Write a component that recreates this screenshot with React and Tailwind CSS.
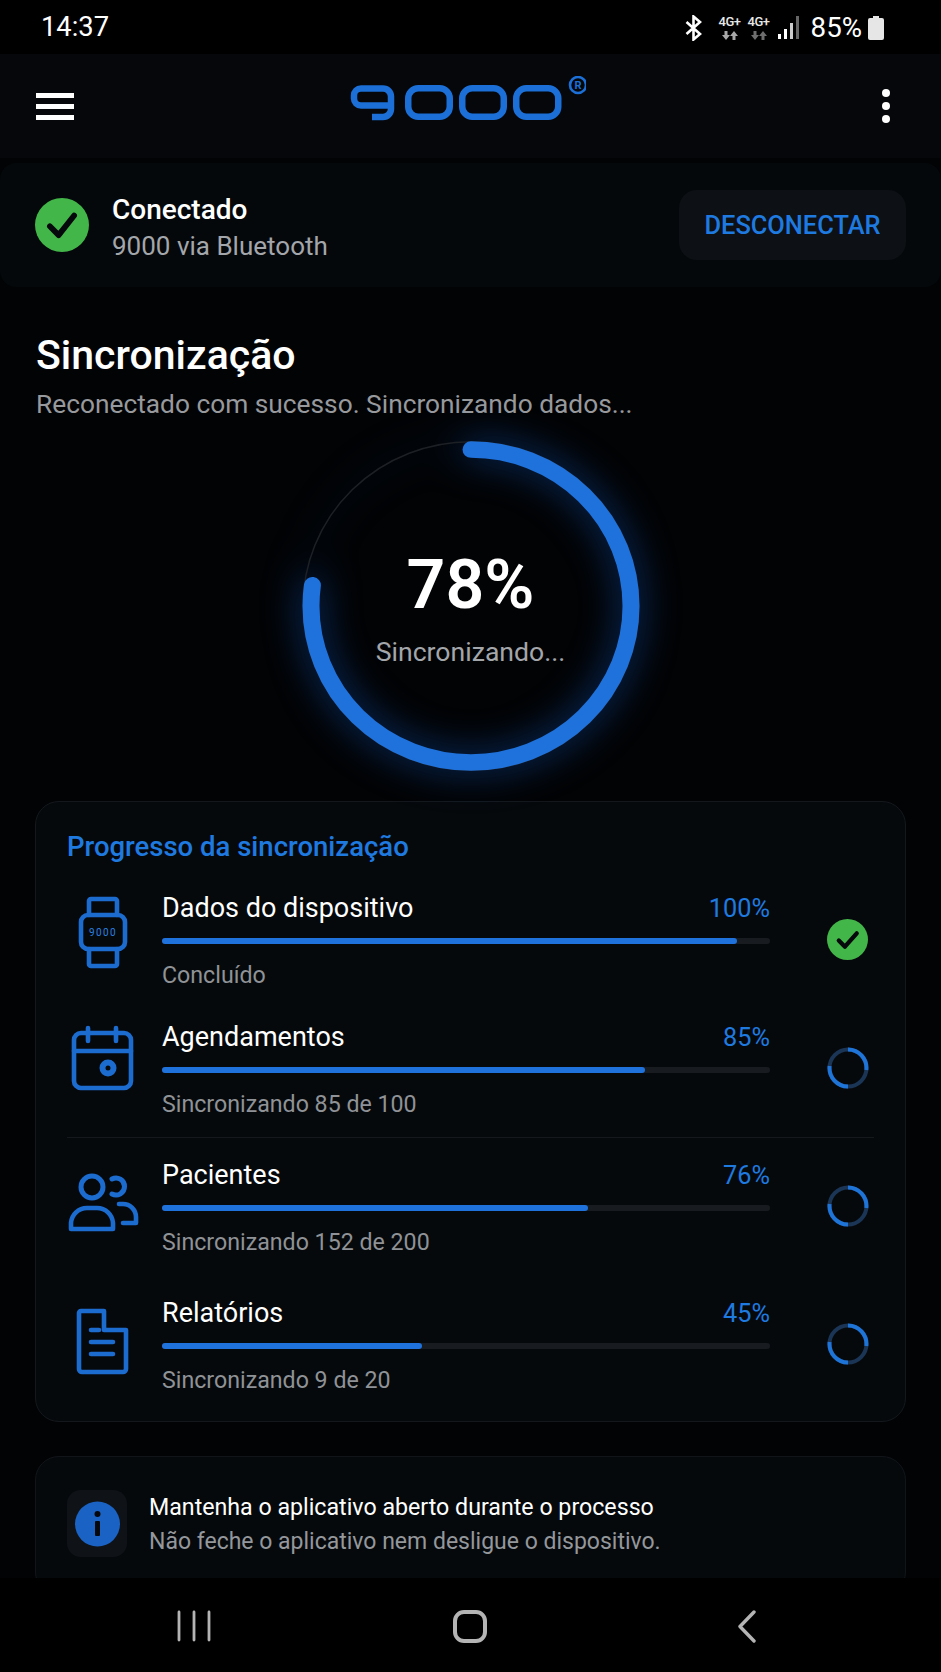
import React from 'react';

const rows = [
  { name: 'Dados do dispositivo', pct: '100%', fill: 'w-[94.6%]', sub: 'Concluído', icon: 'watch', gap: 'mt-[28px]' },
  { name: 'Agendamentos', pct: '85%', fill: 'w-[79.5%]', sub: 'Sincronizando 85 de 100', icon: 'calendar', gap: 'mt-[31px]' },
  { name: 'Pacientes', pct: '76%', fill: 'w-[70%]', sub: 'Sincronizando 152 de 200', icon: 'users', gap: 'mt-[21px]', divider: true },
  { name: 'Relatórios', pct: '45%', fill: 'w-[42.7%]', sub: 'Sincronizando 9 de 20', icon: 'doc', gap: 'mt-[40px]' },
];

function CheckBadge({ size, check }) {
  return (
    <svg width={size} height={size} viewBox="0 0 40 40" className="shrink-0">
      <circle cx="20" cy="20" r="20" fill="#43b649" />
      <path d={check} fill="none" stroke="#06090c" strokeWidth="4.2" strokeLinecap="round" strokeLinejoin="round" />
    </svg>
  );
}

function Spinner() {
  return (
    <svg width="42" height="42" viewBox="0 0 42 42" className="shrink-0">
      <circle cx="21" cy="21" r="18.5" fill="none" stroke="#1b3556" strokeWidth="4" />
      <path d="M21 2.5 A18.5 18.5 0 0 1 39.3 23" fill="none" stroke="#1f74d8" strokeWidth="4" />
      <path d="M21 39.5 A18.5 18.5 0 0 1 2.6 19" fill="none" stroke="#1f74d8" strokeWidth="4" />
    </svg>
  );
}

function RowIcon({ type }) {
  const line = { fill: 'none', stroke: '#1c6cd0', strokeWidth: 4.6, strokeLinejoin: 'round', strokeLinecap: 'round' };
  return (
    <svg width="72" height="98" viewBox="0 0 72 98" className="shrink-0">
      {type === 'watch' && (
        <g {...line}>
          <rect x="14" y="23" width="44" height="34" rx="7" />
          <path d="M22 23 V9 a2 2 0 0 1 2 -2 H48 a2 2 0 0 1 2 2 V23" />
          <path d="M22 57 V72 a2 2 0 0 0 2 2 H48 a2 2 0 0 0 2 -2 V57" />
          <text x="36" y="44" textAnchor="middle" fontSize="10" fontFamily="Roboto" fontWeight="400" fill="#2a80e0" stroke="none" letterSpacing="1.4">9000</text>
        </g>
      )}
      {type === 'calendar' && (
        <g {...line}>
          <rect x="7" y="12" width="57" height="55" rx="7" />
          <path d="M7 30 H64" />
          <path d="M21 7 V20 M49 7 V20" />
          <circle cx="41" cy="47" r="5.5" strokeWidth="6" />
        </g>
      )}
      {type === 'users' && (
        <g {...line}>
          <circle cx="25" cy="28" r="11" strokeWidth="5" />
          <path d="M4 70 V64 a16 16 0 0 1 16 -15 H30 a16 16 0 0 1 16 15 V70 Z" />
          <path d="M45 20 a8.5 8.5 0 1 1 0 15" strokeWidth="5" />
          <path d="M52 45 H56 a13 13 0 0 1 13 13 V64 H56" />
        </g>
      )}
      {type === 'doc' && (
        <g {...line}>
          <path d="M12 16 a2 2 0 0 1 2 -2 H37 V33 H59 V72 a3 3 0 0 1 -3 3 H15 a3 3 0 0 1 -3 -3 Z" />
          <path d="M24 33 H32 M24 45 H46 M24 57 H46" />
        </g>
      )}
    </svg>
  );
}

function Logo() {
  const s = { fill: 'none', stroke: '#1b6fd6', strokeWidth: 6.5 };
  return (
    <svg width="240" height="60" viewBox="0 0 240 60">
      <path {...s} strokeLinejoin="round" d="M45 29.5 H15 a7 7 0 0 1 -7 -7 V19.5 a7 7 0 0 1 7 -7 H37 a8 8 0 0 1 8 8 V33 a8 8 0 0 1 -8 8 H26" />
      <rect {...s} x="62.25" y="12.25" width="41.5" height="28.5" rx="10" />
      <rect {...s} x="116.25" y="12.25" width="41.5" height="28.5" rx="10" />
      <rect {...s} x="170.25" y="12.25" width="42" height="28.5" rx="10" />
      <circle cx="232" cy="9" r="8" fill="none" stroke="#1b6fd6" strokeWidth="2.6" />
      <text x="232" y="13" textAnchor="middle" fontSize="11" fontFamily="Roboto" fontWeight="700" fill="#1b6fd6">R</text>
    </svg>
  );
}

function NetBadge({ arrows }) {
  return (
    <div className="w-[24px] flex flex-col items-center text-[13px] leading-[14px] font-medium text-[#e8e8e8] tracking-[-0.5px]">
      <span>4G+</span>
      <svg width="16" height="9" viewBox="0 0 16 9" className="mt-[2px]" fill={arrows}>
        <path d="M4 9 L0 4 H2.5 V0 H5.5 V4 H8 Z" />
        <path d="M12 0 L16 5 H13.5 V9 H10.5 V5 H8 Z" />
      </svg>
    </div>
  );
}

function StatusBar() {
  return (
    <div className="h-[54px] shrink-0 bg-black flex items-center pt-[2px] pl-[41px] pr-[57px] text-white">
      <span className="text-[27.3px] leading-none">14:37</span>
      <div className="ml-auto flex items-center">
        <svg width="18" height="26" viewBox="0 0 18 26" fill="none" stroke="#fff" strokeWidth="2.6">
          <path d="M1.5 7 L15 19 L8.5 24.5 V1.5 L15 7 L1.5 19" />
        </svg>
        <div className="ml-[15px]"><NetBadge arrows="#a8a8a8" /></div>
        <div className="ml-[5px]"><NetBadge arrows="#6e6e6e" /></div>
        <svg width="22" height="23" viewBox="0 0 22 23" className="ml-[7px]">
          <rect x="0" y="18" width="3" height="5" fill="#fff" />
          <rect x="6" y="13" width="3" height="10" fill="#fff" />
          <rect x="12" y="7" width="3" height="16" fill="#ccc" />
          <rect x="18" y="0" width="3" height="23" fill="#666" />
        </svg>
        <span className="ml-[11px] text-[27.7px] leading-none">85%</span>
        <svg width="16" height="24" viewBox="0 0 16 24" className="ml-[6px]">
          <path d="M5 0 H11 V2 H14 a2 2 0 0 1 2 2 V22 a2 2 0 0 1 -2 2 H2 a2 2 0 0 1 -2 -2 V4 a2 2 0 0 1 2 -2 H5 Z" fill="#e6e6e6" />
        </svg>
      </div>
    </div>
  );
}

export default function App() {
  return (
    <div className="h-[1672px] w-[941px] flex flex-col overflow-hidden bg-black font-[Roboto,sans-serif] text-white">
      <StatusBar />

      <div className="flex-1 min-h-0 overflow-hidden bg-[#020305]">
        {/* header */}
        <div className="h-[104px] bg-[#05070a] flex items-center justify-between pl-[36px] pr-[51px]">
          <div className="w-[38px] flex flex-col gap-[6px]">
            <div className="h-[5px] bg-white" />
            <div className="h-[5px] bg-white" />
            <div className="h-[5px] bg-white" />
          </div>
          <div className="mr-[24px]"><Logo /></div>
          <div className="flex flex-col gap-[5px]">
            <div className="w-[8px] h-[8px] rounded-full bg-white" />
            <div className="w-[8px] h-[8px] rounded-full bg-white" />
            <div className="w-[8px] h-[8px] rounded-full bg-white" />
          </div>
        </div>

        {/* connection */}
        <div className="mt-[5px] h-[124px] rounded-[16px] bg-[#05080b] flex items-center pl-[35px] pr-[35px]">
          <CheckBadge size={54} check="M11 21 L17.5 27.5 L29 13" />
          <div className="ml-[23px] mt-[6px]">
            <div className="text-[28px] leading-[36px] font-medium">Conectado</div>
            <div className="text-[26px] leading-[36px] text-[#a3a6aa]">9000 via Bluetooth</div>
          </div>
          <button className="ml-auto w-[227px] h-[70px] pt-[1px] rounded-[18px] bg-[#0d1014] text-[25.4px] font-medium text-[#1f7ae0]">DESCONECTAR</button>
        </div>

        {/* title */}
        <h1 className="mt-[46px] px-[36px] text-[41px] leading-[44px] font-medium">Sincronização</h1>
        <p className="mt-[11px] px-[36px] text-[26.3px] leading-[32px] text-[#97999d]">Reconectado com sucesso. Sincronizando dados...</p>

        {/* ring */}
        <div className="relative mt-[10px] mx-auto w-[360px] h-[352px]">
          <svg width="360" height="352" viewBox="0 0 360 360" preserveAspectRatio="none" className="overflow-visible drop-shadow-[0_0_18px_rgba(20,110,240,0.5)]">
            <circle cx="180" cy="180" r="168" fill="none" stroke="#1d2126" strokeWidth="1.5" />
            <circle
              cx="180"
              cy="180"
              r="160"
              fill="none"
              stroke="#1f72dc"
              strokeWidth="17"
              strokeLinecap="round"
              strokeDasharray="775 1005.3"
              transform="rotate(-90 180 180)"
            />
          </svg>
          <div className="absolute inset-0 flex flex-col items-center pt-[112px]">
            <div className="text-[68px] leading-[86px] font-semibold">78%</div>
            <div className="mt-[9px] text-[26.6px] leading-[30px] text-[#a3a6aa]">Sincronizando...</div>
          </div>
        </div>

        {/* progress card */}
        <div className="mt-[19px] mx-[35px] rounded-[24px] border border-[#14181d] bg-[#06090c] pt-[28px] pb-[26px] px-[31px]">
          <div className="text-[27.5px] leading-[34px] font-medium text-[#1f7ae0]">Progresso da sincronização</div>
          {rows.map(r => (
            <div key={r.name}>
              {r.divider && <div className="mt-[18px] h-px bg-[#15191e]" />}
              <div className={`${r.gap} h-[98px] flex items-center`}>
                <div className="w-[95px] shrink-0"><RowIcon type={r.icon} /></div>
                <div className="w-[608px] shrink-0">
                  <div className="h-[32px] flex items-center justify-between">
                    <span className="text-[27px] leading-[32px]">{r.name}</span>
                    <span className="text-[25.3px] leading-[32px] pt-[2px] text-[#1f7ae0]">{r.pct}</span>
                  </div>
                  <div className="mt-[14px] h-[6px] rounded-full bg-[#181b20]">
                    <div className={`h-full rounded-full bg-[#1f72dc] ${r.fill}`} />
                  </div>
                  <div className="mt-[16px] text-[23.2px] leading-[30px] text-[#8f9296]">{r.sub}</div>
                </div>
                <div className="ml-[57px] mb-[4px]">
                  {r.icon === 'watch' ? <CheckBadge size={41} check="M11.5 21 L17.5 27 L29 14" /> : <Spinner />}
                </div>
              </div>
            </div>
          ))}
        </div>

        {/* info card */}
        <div className="mt-[34px] mx-[35px] h-[140px] rounded-[24px] border border-[#11151a] bg-[#06090c] pt-[33px] pl-[31px] flex items-start">
          <div className="w-[60px] h-[67px] rounded-[14px] bg-[#0f1318] flex items-center justify-center">
            <svg width="45" height="46" viewBox="0 0 45 46">
              <circle cx="22.5" cy="23" r="22.5" fill="#1a63c4" />
              <circle cx="22.5" cy="13" r="3" fill="#05080c" />
              <rect x="20" y="20" width="5" height="15" rx="1" fill="#05080c" />
            </svg>
          </div>
          <div className="ml-[22px]">
            <div className="text-[23.2px] leading-[34px]">Mantenha o aplicativo aberto durante o processo</div>
            <div className="text-[23px] leading-[34px] text-[#94979b] mt-[1px]">Não feche o aplicativo nem desligue o dispositivo.</div>
          </div>
        </div>
      </div>

      {/* nav bar */}
      <div className="h-[94px] shrink-0 bg-black">
        <div className="flex items-center h-full pt-[2px]">
          <svg width="34" height="32" viewBox="0 0 34 32" className="ml-[177px]" fill="none" stroke="#b4b4b4" strokeWidth="2.8" strokeLinecap="round">
            <path d="M2 2 V30 M17 2 V30 M32 2 V30" />
          </svg>
          <svg width="34" height="33" viewBox="0 0 34 33" className="ml-[242px]" fill="none" stroke="#b4b4b4" strokeWidth="4">
            <rect x="2" y="2" width="30" height="29" rx="9" />
          </svg>
          <svg width="20" height="33" viewBox="0 0 20 33" className="ml-[250px]" fill="none" stroke="#b4b4b4" strokeWidth="3.4" strokeLinecap="round" strokeLinejoin="round">
            <path d="M17 2 L3 16.5 L17 31" />
          </svg>
        </div>
      </div>
    </div>
  );
}
